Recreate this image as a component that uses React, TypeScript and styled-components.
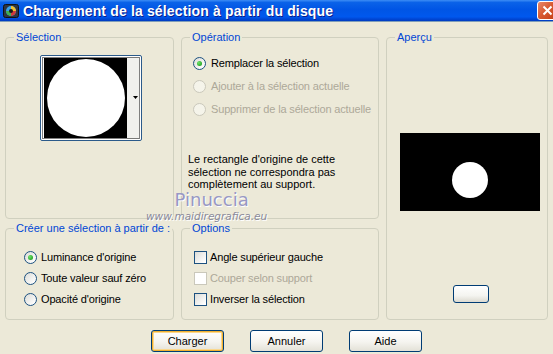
import styled, { createGlobalStyle } from 'styled-components';

const GlobalStyle = createGlobalStyle`
  html, body {
    margin: 0;
    padding: 0;
    background: #ece9d8;
  }
  body {
    font-family: "Liberation Sans", Arial, sans-serif;
    font-size: 11px;
    color: #000;
  }
`;

const Window = styled.div`
  position: relative;
  width: 553px;
  height: 354px;
  overflow: hidden;
  background: #ece9d8;
  display: flex;
  flex-direction: column;
`;

const TitleBar = styled.div`
  height: 21px;
  flex: none;
  display: flex;
  align-items: center;
  gap: 4px;
  padding-left: 3px;
  overflow: hidden;
  background: linear-gradient(
    to bottom,
    #3d8df5 0%,
    #0a62e8 12%,
    #0055e5 45%,
    #0058ee 80%,
    #0047d6 90%,
    #003cc0 100%
  );
  border-bottom: 1px solid #7f9db9;
`;

const TitleText = styled.span`
  flex: 1;
  color: #fff;
  font-family: "Liberation Sans", Arial, sans-serif;
  font-weight: bold;
  font-size: 14px;
  letter-spacing: 0.15px;
  text-shadow: 1px 1px #0a1e8c;
  white-space: nowrap;
`;

const CloseButton = styled.div`
  width: 21px;
  height: 19px;
  margin-right: -5px;
  flex: none;
  box-sizing: border-box;
  border: 1px solid #fff;
  border-radius: 3px;
  background: linear-gradient(135deg, #e8886a 0%, #d85a32 45%, #c23c12 100%);
  display: flex;
  align-items: center;
  justify-content: center;
`;

const Body = styled.div`
  flex: 1;
  padding: 15px 0 0 5px;
`;

const Grid = styled.div`
  display: grid;
  grid-template-columns: 169px 198px 162px;
  grid-template-rows: 182px 92px;
  column-gap: 7px;
  row-gap: 9px;
`;

const Group = styled.section<{ $padding: string; $col: number; $row: string }>`
  position: relative;
  box-sizing: border-box;
  border: 1px solid #d0d0bf;
  border-radius: 4px;
  padding: ${(p) => p.$padding};
  grid-column: ${(p) => p.$col};
  grid-row: ${(p) => p.$row};
`;

const Legend = styled.span`
  position: absolute;
  top: -7px;
  left: 8px;
  padding: 0 2px;
  background: #ece9d8;
  color: #0046d5;
  line-height: 13px;
  white-space: nowrap;
`;

const Thumb = styled.div`
  width: 102px;
  height: 86px;
  box-sizing: border-box;
  border: 1px solid #2b5a8a;
  border-radius: 2px;
  background: #fff;
  display: flex;
`;

const OptionList = styled.div<{ $gap: number; $indent: number }>`
  display: flex;
  flex-direction: column;
  gap: ${(p) => p.$gap}px;
  margin-left: ${(p) => p.$indent}px;
`;

const OptionRow = styled.label<{ $disabled?: boolean; $space: number }>`
  display: flex;
  align-items: center;
  gap: ${(p) => p.$space}px;
  height: 13px;
  line-height: 13px;
  white-space: nowrap;
  letter-spacing: -0.15px;
  color: ${(p) => (p.$disabled ? '#aca899' : '#000')};
`;

const Radio = styled.span<{ $checked?: boolean; $disabled?: boolean }>`
  width: 13px;
  height: 13px;
  flex: none;
  box-sizing: border-box;
  border-radius: 50%;
  border: 1px solid ${(p) => (p.$disabled ? '#cac8bb' : '#1c5180')};
  background: ${(p) =>
    p.$disabled ? '#f5f4ea' : 'linear-gradient(135deg, #dcdcd7 0%, #ffffff 90%)'};
  display: flex;
  align-items: center;
  justify-content: center;

  &::after {
    content: '';
    display: ${(p) => (p.$checked ? 'block' : 'none')};
    width: 5px;
    height: 5px;
    border-radius: 50%;
    background: radial-gradient(circle at 35% 35%, #6fe36b 0%, #21a121 80%);
  }
`;

const Checkbox = styled.span<{ $disabled?: boolean }>`
  width: 13px;
  height: 13px;
  flex: none;
  box-sizing: border-box;
  border: 1px solid ${(p) => (p.$disabled ? '#cac8bb' : '#1c5180')};
  background: ${(p) =>
    p.$disabled ? '#ffffff' : 'linear-gradient(135deg, #dcdcd7 0%, #ffffff 90%)'};
`;

const Note = styled.p`
  margin: 37px 0 0 0;
  line-height: 12.5px;
`;

const PreviewPane = styled.div`
  width: 140px;
  height: 78px;
  margin: 95px 0 0 13px;
  background: #000;
  display: flex;
`;

const SmallButton = styled.div`
  width: 36px;
  height: 18px;
  margin: 74px 0 0 66px;
  box-sizing: border-box;
  border: 1px solid #003c74;
  border-radius: 3px;
  background: linear-gradient(to bottom, #ffffff 0%, #f4f4f0 60%, #dcdad0 100%);
`;

const ButtonRow = styled.div`
  display: flex;
  gap: 26px;
  padding: 10px 0 0 146px;
`;

const Button = styled.div<{ $default?: boolean }>`
  width: 73px;
  height: 22px;
  box-sizing: border-box;
  border: 1px solid #003c74;
  border-radius: 3px;
  background: linear-gradient(to bottom, #ffffff 0%, #f5f4ef 55%, #e3e1d7 100%);
  box-shadow: ${(p) =>
    p.$default ? 'inset 0 0 0 1px #f0b030, inset 0 0 0 2px #fbd88e' : 'none'};
  display: flex;
  align-items: center;
  justify-content: center;
  line-height: 13px;
`;

const Watermark = styled.div`
  position: absolute;
  left: 146px;
  top: 190px;
  display: flex;
  flex-direction: column;
  align-items: center;
  pointer-events: none;
`;

const WatermarkName = styled.span`
  margin-left: 10px;
  font-family: "DejaVu Sans", sans-serif;
  font-size: 18px;
  line-height: 20px;
  color: #9898c4;
  text-shadow: 1px 1px 0 #ffffff;
`;

const WatermarkSite = styled.span`
  font-family: "DejaVu Sans", sans-serif;
  font-style: italic;
  font-size: 10.5px;
  line-height: 12px;
  color: #8a8a9a;
  text-shadow: 1px 1px 0 #ffffff;
`;

function AppIcon() {
  return (
    <svg width="16" height="16" viewBox="0 0 16 16">
      <rect x="0.5" y="1.5" width="15" height="13" rx="2" fill="#2e3440" stroke="#111" />
      <circle cx="8" cy="8" r="5" fill="#3aa0e8" />
      <path d="M8 3 A5 5 0 0 1 13 8 L8 8 Z" fill="#f0c030" />
      <path d="M13 8 A5 5 0 0 1 8 13 L8 8 Z" fill="#d03a3a" />
      <path d="M8 13 A5 5 0 0 1 3 8 L8 8 Z" fill="#40b050" />
      <circle cx="8" cy="8" r="2" fill="#1a1a1a" />
    </svg>
  );
}

function SelectionThumb() {
  return (
    <svg width="100" height="84" viewBox="0 0 100 84">
      <rect x="86" y="1" width="12" height="82" fill="#f1f1ee" />
      <rect x="3" y="2" width="83" height="80" fill="#000" />
      <circle cx="45" cy="42" r="39" fill="#fff" />
      <rect
        x="1.5"
        y="1.5"
        width="97"
        height="81"
        fill="none"
        stroke="#000"
        strokeDasharray="1 1"
      />
      <path d="M92 40 L97 40 L94.5 43 Z" fill="#000" />
    </svg>
  );
}

export default function App() {
  return (
    <Window>
      <GlobalStyle />
      <TitleBar>
        <AppIcon />
        <TitleText>Chargement de la sélection à partir du disque</TitleText>
        <CloseButton>
          <svg width="11" height="11" viewBox="0 0 11 11">
            <path d="M1.5 1.5 L9.5 9.5 M9.5 1.5 L1.5 9.5" stroke="#fff" strokeWidth="2" />
          </svg>
        </CloseButton>
      </TitleBar>
      <Body>
        <Grid>
          <Group $padding="17px 0 0 34px" $col={1} $row="1">
            <Legend>Sélection</Legend>
            <Thumb>
              <SelectionThumb />
            </Thumb>
          </Group>
          <Group $padding="19px 0 0 6px" $col={2} $row="1">
            <Legend>Opération</Legend>
            <OptionList $gap={10} $indent={5}>
              <OptionRow $space={5}>
                <Radio $checked />
                Remplacer la sélection
              </OptionRow>
              <OptionRow $space={5} $disabled>
                <Radio $disabled />
                Ajouter à la sélection actuelle
              </OptionRow>
              <OptionRow $space={5} $disabled>
                <Radio $disabled />
                Supprimer de la sélection actuelle
              </OptionRow>
            </OptionList>
            <Note>
              Le rectangle d'origine de cette
              <br />
              sélection ne correspondra pas
              <br />
              complètement au support.
            </Note>
          </Group>
          <Group $padding="0" $col={3} $row="1 / span 2">
            <Legend>Aperçu</Legend>
            <PreviewPane>
              <svg width="140" height="78" viewBox="0 0 140 78">
                <circle cx="70" cy="47" r="18" fill="#fff" />
              </svg>
            </PreviewPane>
            <SmallButton />
          </Group>
          <Group $padding="22px 0 0 18px" $col={1} $row="2">
            <Legend>Créer une sélection à partir de :</Legend>
            <OptionList $gap={8} $indent={0}>
              <OptionRow $space={4}>
                <Radio $checked />
                Luminance d'origine
              </OptionRow>
              <OptionRow $space={4}>
                <Radio />
                Toute valeur sauf zéro
              </OptionRow>
              <OptionRow $space={4}>
                <Radio />
                Opacité d'origine
              </OptionRow>
            </OptionList>
          </Group>
          <Group $padding="22px 0 0 12px" $col={2} $row="2">
            <Legend>Options</Legend>
            <OptionList $gap={8} $indent={0}>
              <OptionRow $space={3}>
                <Checkbox />
                Angle supérieur gauche
              </OptionRow>
              <OptionRow $space={3} $disabled>
                <Checkbox $disabled />
                Couper selon support
              </OptionRow>
              <OptionRow $space={3}>
                <Checkbox />
                Inverser la sélection
              </OptionRow>
            </OptionList>
          </Group>
        </Grid>
        <ButtonRow>
          <Button $default>Charger</Button>
          <Button>Annuler</Button>
          <Button>Aide</Button>
        </ButtonRow>
      </Body>
      <Watermark>
        <WatermarkName>Pinuccia</WatermarkName>
        <WatermarkSite>www.maidiregrafica.eu</WatermarkSite>
      </Watermark>
    </Window>
  );
}
